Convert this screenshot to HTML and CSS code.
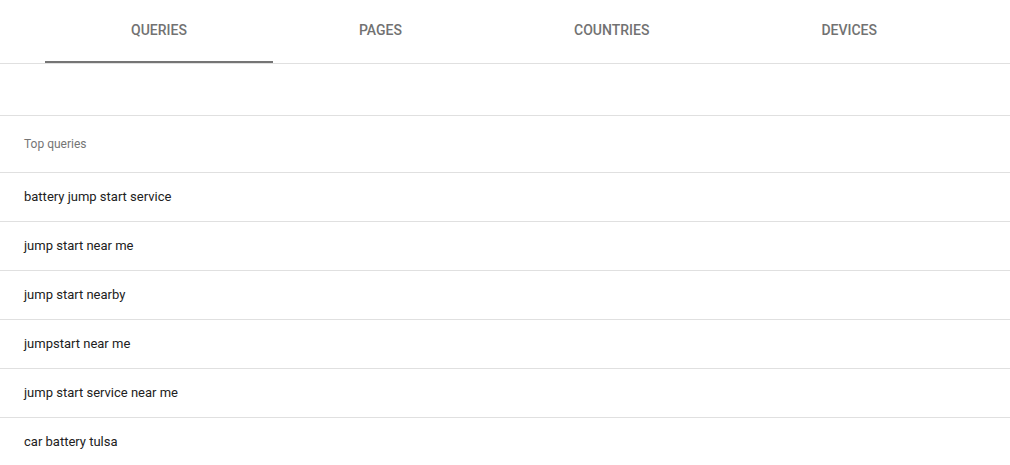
FILE: index.html
```html
<!DOCTYPE html>
<html lang="en">
<head>
<meta charset="utf-8">
<title>Top queries</title>
<link rel="stylesheet" href="styles.css">
</head>
<body>
<div class="page">
  <nav class="tabs">
    <div class="tab tab-active">Queries</div>
    <div class="tab">Pages</div>
    <div class="tab">Countries</div>
    <div class="tab">Devices</div>
  </nav>
  <div class="spacer"></div>
  <div class="table">
    <div class="table-head">Top queries</div>
    <div class="row">battery jump start service</div>
    <div class="row">jump start near me</div>
    <div class="row">jump start nearby</div>
    <div class="row">jumpstart near me</div>
    <div class="row">jump start service near me</div>
    <div class="row">car battery tulsa</div>
  </div>
</div>
</body>
</html>
```

FILE: styles.css
```css
html, body {
  margin: 0;
  padding: 0;
  background: #ffffff;
}
body {
  font-family: Roboto, "Liberation Sans", Arial, sans-serif;
  color: #212121;
  overflow: hidden;
}
.page {
  width: 1010px;
}
.tabs {
  display: flex;
  padding: 0 47px 0 45px;
  height: 63px;
  border-bottom: 1px solid #e0e0e0;
}
.tab {
  flex: 1 1 auto;
  display: flex;
  align-items: center;
  justify-content: center;
  font-size: 14px;
  font-weight: 500;
  text-transform: uppercase;
  color: #727272;
  padding-bottom: 3px;
  box-sizing: border-box;
}
.tab-active {
  border-bottom: 2px solid #757575;
  padding-bottom: 1px;
}
.spacer {
  height: 51px;
  border-bottom: 1px solid #e0e0e0;
}
.table-head {
  height: 56px;
  display: flex;
  align-items: center;
  padding-left: 24px;
  font-size: 12px;
  color: #757575;
  border-bottom: 1px solid #e0e0e0;
}
.row {
  height: 49px;
  box-sizing: border-box;
  display: flex;
  align-items: center;
  padding: 0 0 2px 24px;
  font-size: 13px;
  color: #212121;
  border-bottom: 1px solid #e0e0e0;
}
```
